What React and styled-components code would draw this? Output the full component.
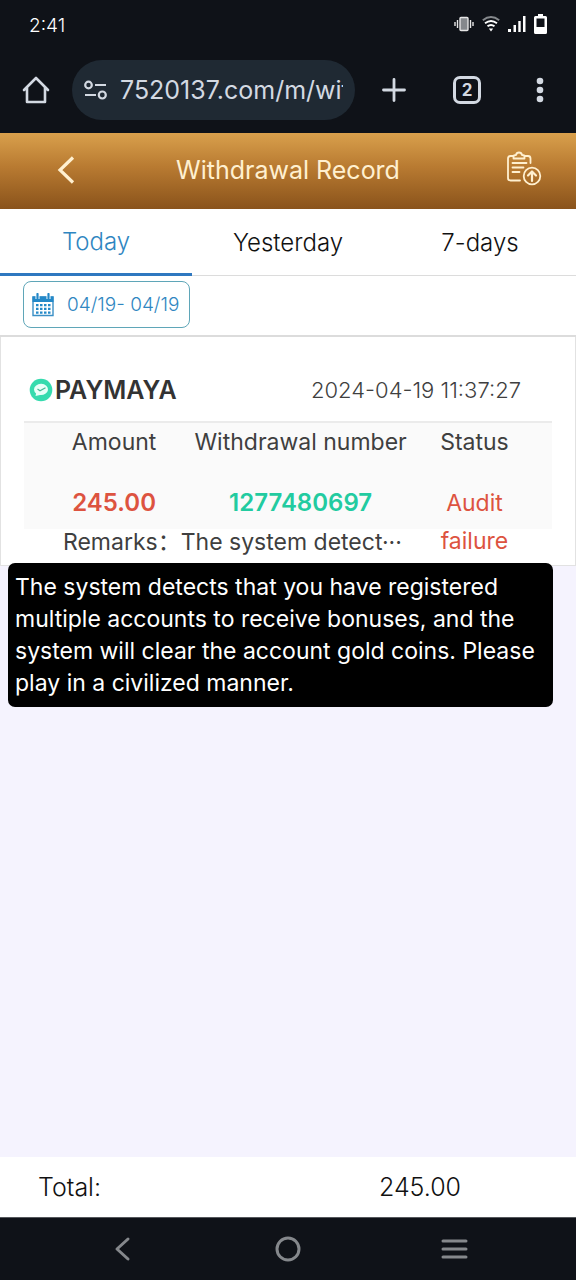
import React from 'react';
import styled, { createGlobalStyle, ThemeProvider } from 'styled-components';

const theme = {
  colors: {
    chrome: '#0f1218',
    chromeText: '#d3d9e2',
    accent: '#2f86c1',
    text: '#3f3f3f',
    danger: '#dd5340',
    success: '#22cba0',
    cream: '#fff0d0'
  },
  sizes: { small: '19px', record: '23px', body: '24px', large: '25px' }
};

const GlobalStyle = createGlobalStyle`
  * {
    box-sizing: border-box;
  }

  body {
    margin: 0;
    font-family: Inter, 'Noto Sans CJK SC', sans-serif;
    font-size: 24px;
    font-weight: 300;
  }

  button, input {
    font: inherit;
    color: inherit;
    padding: 0;
    border: 0;
    background: none;
  }

  svg {
    display: block;
    flex: none;
  }
`;

const Page = styled.div`
  display: flex;
  flex-direction: column;
  min-height: 100vh;
  background: #f5f3fe;
`;

const StatusBar = styled.div`
  display: flex;
  align-items: center;
  justify-content: space-between;
  height: 50px;
  padding: 0 29px;
  background: ${({ theme }) => theme.colors.chrome};
  color: #fff;
  font-size: ${({ theme }) => theme.sizes.small};
`;

const BrowserBar = styled.div`
  display: flex;
  align-items: center;
  height: 83px;
  padding: 0 22px 3px;
  background: ${({ theme }) => theme.colors.chrome};
  color: ${({ theme }) => theme.colors.chromeText};
`;

const IconButton = styled.button`
  display: flex;
  align-items: center;
  justify-content: center;
  flex: none;
  width: 28px;
  height: 40px;
`;

const AddressBar = styled.label`
  display: flex;
  align-items: center;
  gap: 13px;
  flex: 1;
  min-width: 0;
  height: 60px;
  margin-left: 22px;
  padding: 0 12px;
  border-radius: 30px;
  background: #1f2933;

  input {
    flex: 1;
    min-width: 0;
    width: 0;
    outline: 0;
    font-size: ${({ theme }) => theme.sizes.large};
    font-weight: 400;
  }
`;

const BrowserActions = styled.div`
  display: flex;
  justify-content: space-between;
  width: 174px;
  margin-left: 25px;
`;

const Header = styled.header`
  display: grid;
  grid-template-columns: 100px 1fr 100px;
  align-items: center;
  height: 76px;
  padding: 0 16px 3px;
  background: linear-gradient(#d9a04c, #b87a31 45%, #8a531b);
  color: ${({ theme }) => theme.colors.cream};

  h1 {
    margin: 0;
    font-size: ${({ theme }) => theme.sizes.large};
    font-weight: 400;
    text-align: center;
  }

  button {
    width: 40px;
    justify-self: center;
  }

  button:last-child {
    width: 72px;
    justify-self: end;
  }
`;

const Tabs = styled.nav`
  display: grid;
  grid-template-columns: repeat(3, 1fr);
  height: 67px;
  background: #fff;
`;

const Tab = styled.button`
  border-bottom: ${({ $active }) => ($active ? '3px solid #2f78c0' : '1px solid #dcdcdc')};
  color: ${({ $active, theme }) => ($active ? theme.colors.accent : '#111')};
`;

const Filters = styled.div`
  height: 61px;
  padding: 5px 23px 0;
  border-bottom: 2px solid #dcdcdc;
  background: #fff;
`;

const DateButton = styled.button`
  display: flex;
  align-items: center;
  gap: 13px;
  height: 47px;
  padding: 0 10px 0 8px;
  border: 1px solid #5fa6b8;
  border-radius: 8px;
  color: ${({ theme }) => theme.colors.accent};
  font-size: ${({ theme }) => theme.sizes.small};
`;

const Record = styled.article`
  position: relative;
  height: 229px;
  padding: 24px 23px 0;
  border: 1px solid #e2e2e2;
  border-top: 0;
  background: #fff;
  color: ${({ theme }) => theme.colors.text};
  font-size: ${({ theme }) => theme.sizes.record};
  font-weight: 400;
`;

const RecordHead = styled.div`
  display: flex;
  align-items: center;
  justify-content: space-between;
  height: 60px;
  padding: 0 31px 2px 5px;

  h2 {
    display: flex;
    align-items: center;
    gap: 2px;
    margin: 0;
    font-size: ${({ theme }) => theme.sizes.large};
    font-weight: 600;
    color: #333;
  }

  time {
    font-size: 22px;
    font-weight: 300;
  }
`;

const Details = styled.div`
  padding: 0 12px;
  border-top: 2px solid #ebebeb;
  background: #fafafa;
`;

const DetailsTable = styled.table`
  width: 100%;
  table-layout: fixed;
  border-collapse: collapse;
  text-align: center;
  white-space: nowrap;

  th {
    height: 38px;
    padding: 0;
    font-weight: 400;
  }

  th:nth-child(1) {
    width: 31%;
  }

  th:nth-child(2) {
    width: 43%;
  }

  td {
    height: 68px;
    padding: 23px 0 0;
    vertical-align: top;
    line-height: 38px;
  }
`;

const Value = styled.strong`
  font-size: ${({ theme }) => theme.sizes.body};
  font-weight: 600;
  color: ${({ $tone, theme }) => theme.colors[$tone]};
`;

/* the second line hangs below the table, beside the remarks */
const Status = styled.span`
  display: block;
  height: 38px;
  color: ${({ theme }) => theme.colors.danger};
`;

const Remarks = styled.p`
  margin: 0;
  padding-left: 39px;
  line-height: 26px;
  white-space: nowrap;
`;

const Cjk = styled.span`
  font-family: 'Noto Sans CJK SC', sans-serif;
  line-height: 0;
`;

const Tooltip = styled.div`
  position: absolute;
  top: 226px;
  left: 7px;
  right: 22px;
  padding: 8px 7px;
  border-radius: 7px;
  background: #000;
  color: #fff;
  line-height: 32px;
`;

const Total = styled.footer`
  display: grid;
  grid-template-columns: 264px 1fr;
  align-items: center;
  height: 60px;
  margin-top: auto;
  padding: 0 38px;
  background: #fff;
  color: #111;
  font-size: ${({ theme }) => theme.sizes.large};

  output {
    text-align: center;
  }
`;

const NavBar = styled.nav`
  display: flex;
  align-items: center;
  justify-content: space-between;
  height: 63px;
  padding: 0 108px;
  border-top: 1px solid #55585c;
  background: ${({ theme }) => theme.colors.chrome};
  color: #85888c;
`;

const VibrateIcon = () => (
  <svg width="20" height="16" viewBox="0 0 20 16" fill="none" stroke="#e6e6e6" strokeWidth="1.4">
    <rect x="6" y="1.5" width="8" height="13" rx="1" fill="#85888c" />
    <path d="M3.5 4v8M16.5 4v8M1 6v4M19 6v4" />
  </svg>
);

const WifiIcon = () => (
  <svg width="18" height="16" viewBox="0 0 18 16" fill="none" stroke="#fff" strokeWidth="1.9">
    <path d="M.8 4.2Q9-2.2 17.2 4.2" stroke="#85888c" />
    <path d="M3 7.2Q9 2.6 15 7.2M5.500 10.300Q9 7.600 12.500 10.300" />
    <path d="M6.800 12.400h4.400L9 15.400z" fill="#fff" stroke="none" />
  </svg>
);

const SignalIcon = () => (
  <svg width="18" height="16" viewBox="0 0 18 16" fill="#fff">
    <path d="M0 13h3v3H0zM5.500 9H8v7H5.500zM10.300 5h2.400v11h-2.400zM15 0h2.500v16H15z" />
  </svg>
);

const BatteryIcon = () => (
  <svg width="13" height="20" viewBox="0 0 13 20" fill="#fff">
    <path fillRule="evenodd" d="M4 0h5v2h2.500Q13 2 13 3.500v15Q13 20 11.500 20h-10Q0 20 0 18.500v-15Q0 2 1.500 2H4zM2.500 4.500V13h8V4.500z" />
  </svg>
);

const StatusIcons = styled.div`
  display: flex;
  align-items: center;
  gap: 8px;
  padding-bottom: 2px;
`;

const HomeIcon = () => (
  <svg width="28" height="28" viewBox="0 0 28 28" fill="none" stroke="currentColor" strokeWidth="2.6" strokeLinejoin="round" strokeLinecap="round">
    <path d="M2 14 14 2l12 12M5 11.500V26h18V11.500" />
  </svg>
);

const TuneIcon = () => (
  <svg width="23" height="20" viewBox="0 0 23 20" fill="none" stroke="currentColor" strokeWidth="2.2">
    <circle cx="4.5" cy="5" r="3.300" />
    <path d="M11 5h11M1 15h11" />
    <circle cx="18.3" cy="15" r="3.500" />
  </svg>
);

const PlusIcon = () => (
  <svg width="24" height="24" viewBox="0 0 24 24" stroke="currentColor" strokeWidth="2.8" strokeLinecap="round">
    <path d="M12 1.500v21M1.500 12h21" />
  </svg>
);

const TabCount = styled.span`
  display: flex;
  align-items: center;
  justify-content: center;
  width: 28px;
  height: 28px;
  border: 3px solid currentColor;
  border-radius: 7px;
  font-size: 17px;
  font-weight: 700;
`;

const MoreIcon = () => (
  <svg width="8" height="26" viewBox="0 0 8 26" fill="currentColor">
    <circle cx="4" cy="4" r="3.3" />
    <circle cx="4" cy="13" r="3.3" />
    <circle cx="4" cy="22" r="3.3" />
  </svg>
);

const BackIcon = () => (
  <svg width="18" height="28" viewBox="0 0 18 28" fill="none" stroke="currentColor" strokeWidth="3.2">
    <path d="M16 1.500 3 14l13 12.500" />
  </svg>
);

const ReportIcon = () => (
  <svg width="36" height="38" viewBox="0 0 36 38" fill="none" stroke="currentColor" strokeWidth="1.8" strokeLinecap="round" strokeLinejoin="round">
    <path d="M7 5H4.500Q2 5 2 7.500v19.500q0 2.500 2.500 2.500H14M19 5h3q2.500 0 2.500 2.500V12" />
    <path d="M7.500 7.500V5.500Q7.500 4 10 4 10.500 1.500 13 1.500T16 4q2.500 0 2.500 1.500v2z" />
    <path d="M6.500 12h14M6.500 16.500h11M6.500 21h7" />
    <circle cx="26" cy="25" r="8.3" />
    <path d="M26 30v-9.500M22 24.500l4-4 4 4" strokeWidth="2.2" />
  </svg>
);

const CalendarIcon = () => (
  <svg width="22" height="24" viewBox="0 0 22 24" fill="none">
    <path d="M1 4h20v18.500H1z" stroke="#3a8fc6" strokeWidth="1.4" />
    <path d="M.5 3.500h21V9H.5z" fill="#2388c8" />
    <path d="M5.500 1v5M16.500 1v5" stroke="#fff" strokeWidth="4" />
    <path d="M5.500 1v4.500M16.500 1v4.500" stroke="#2388c8" strokeWidth="2.2" strokeLinecap="round" />
    <path d="M4 12.200h14.500M4 15.900h14.500M4 19.600h14.500" stroke="#2388c8" strokeWidth="2.2" strokeDasharray="2.5 1.5" />
  </svg>
);

const PaymayaLogo = () => (
  <svg width="24" height="24" viewBox="0 0 24 24" fill="none">
    <circle cx="12" cy="12" r="11.3" fill="#36dbae" />
    <path d="M5 11.500a7 5.600 0 1 1 6 5.500l-4.500 1 .6-2.500A5.600 5.600 0 0 1 5 11.500z" fill="#e9fff8" />
    <path d="m8.500 11 2.500 1.700 5.500-3" stroke="#46b896" strokeWidth="1.3" />
  </svg>
);

const NavIcon = ({ d }) => (
  <svg width="28" height="28" viewBox="0 0 28 28" fill="none" stroke="currentColor" strokeWidth="3" strokeLinecap="round" strokeLinejoin="round">
    <path d={d} />
  </svg>
);

const tabs = ['Today', 'Yesterday', '7-days'];

const App = () => (
  <ThemeProvider theme={theme}>
    <GlobalStyle />
    <Page>
      <StatusBar>
        <span>2:41</span>
        <StatusIcons>
          <VibrateIcon />
          <WifiIcon />
          <SignalIcon />
          <BatteryIcon />
        </StatusIcons>
      </StatusBar>

      <BrowserBar>
        <IconButton aria-label="Home"><HomeIcon /></IconButton>
        <AddressBar>
          <TuneIcon />
          <input aria-label="Address" defaultValue="7520137.com/m/withdraw" />
        </AddressBar>
        <BrowserActions>
          <IconButton aria-label="New tab"><PlusIcon /></IconButton>
          <IconButton aria-label="Open tabs"><TabCount>2</TabCount></IconButton>
          <IconButton aria-label="Menu"><MoreIcon /></IconButton>
        </BrowserActions>
      </BrowserBar>

      <Header>
        <IconButton aria-label="Back"><BackIcon /></IconButton>
        <h1>Withdrawal Record</h1>
        <IconButton aria-label="Report"><ReportIcon /></IconButton>
      </Header>

      <Tabs>
        {tabs.map((label, i) => (
          <Tab key={label} $active={i === 0}>{label}</Tab>
        ))}
      </Tabs>

      <Filters>
        <DateButton>
          <CalendarIcon />
          04/19- 04/19
        </DateButton>
      </Filters>

      <Record>
        <RecordHead>
          <h2><PaymayaLogo />PAYMAYA</h2>
          <time>2024-04-19 11:37:27</time>
        </RecordHead>
        <Details>
          <DetailsTable>
            <thead>
              <tr>
                <th>Amount</th>
                <th>Withdrawal number</th>
                <th>Status</th>
              </tr>
            </thead>
            <tbody>
              <tr>
                <td><Value $tone="danger">245.00</Value></td>
                <td><Value $tone="success">1277480697</Value></td>
                <td><Status>Audit<br />failure</Status></td>
              </tr>
            </tbody>
          </DetailsTable>
        </Details>
        <Remarks>Remarks<Cjk>：</Cjk>The system detect···</Remarks>
        <Tooltip role="tooltip">
          The system detects that you have registered multiple accounts to receive bonuses,
          and the system will clear the account gold coins. Please play in a civilized manner.
        </Tooltip>
      </Record>

      <Total>
        <span>Total:</span>
        <output>245.00</output>
      </Total>

      <NavBar>
        <IconButton aria-label="Back"><NavIcon d="M20 4 9 14l11 10" /></IconButton>
        <IconButton aria-label="Home"><NavIcon d="M14 3a11 11 0 1 1 0 22 11 11 0 0 1 0-22z" /></IconButton>
        <IconButton aria-label="Recents"><NavIcon d="M3 6h23M3 14h23M3 22h23" /></IconButton>
      </NavBar>
    </Page>
  </ThemeProvider>
);

export default App;
